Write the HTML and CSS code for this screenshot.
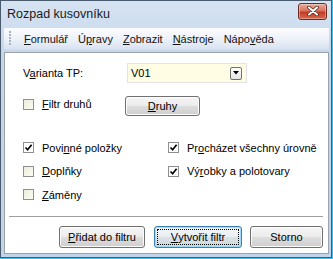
FILE: index.html
```html
<!DOCTYPE html>
<html lang="cs">
<head>
    <meta charset="utf-8">
    <title>Rozpad kusovníku</title>
    <link rel="stylesheet" href="styles.css">
</head>
<body>
    <div class="window">
        <div class="titlebar">
            <span class="title">Rozpad kusovníku</span>
            <button class="close-btn">
                <svg width="14" height="10" viewBox="0 0 14 10">
                    <path d="M3 1.5 L11 8.5 M11 1.5 L3 8.5" stroke="#5a2a22" stroke-width="3.6" stroke-linecap="round"/>
                    <path d="M3 1.5 L11 8.5 M11 1.5 L3 8.5" stroke="#ffffff" stroke-width="2" stroke-linecap="round"/>
                </svg>
            </button>
        </div>

        <div class="client">
            <div class="menubar">
                <span class="grip"></span>
                <span class="menu-item"><u>F</u>ormulář</span>
                <span class="menu-item">Ú<u>p</u>ravy</span>
                <span class="menu-item"><u>Z</u>obrazit</span>
                <span class="menu-item"><u>N</u>ástroje</span>
                <span class="menu-item">Nápo<u>v</u>ěda</span>
            </div>

            <div class="panel">
                <div class="row variant-row">
                    <span class="field-label">V<u>a</u>rianta TP:</span>
                    <div class="combo">
                        <span class="combo-value">V01</span>
                        <span class="combo-arrow">
                            <svg width="6" height="4" viewBox="0 0 6 4"><path d="M0 0 L6 0 L3 3.5 Z" fill="#000"/></svg>
                        </span>
                    </div>
                </div>

                <div class="row filter-row">
                    <label class="check filter-check">
                        <span class="box"></span>
                        <span><u>F</u>iltr druhů</span>
                    </label>
                    <button class="btn small-btn"><u>D</u>ruhy</button>
                </div>

                <div class="check-grid">
                    <label class="check">
                        <span class="box checked"><svg width="9" height="9" viewBox="0 0 9 9"><path d="M1.5 4.5 L3.6 6.8 L7.6 1.8" stroke="#000" stroke-width="1.7" fill="none"/></svg></span>
                        <span>Povi<u>n</u>né položky</span>
                    </label>
                    <label class="check">
                        <span class="box checked"><svg width="9" height="9" viewBox="0 0 9 9"><path d="M1.5 4.5 L3.6 6.8 L7.6 1.8" stroke="#000" stroke-width="1.7" fill="none"/></svg></span>
                        <span>Pr<u>o</u>cházet všechny úrovně</span>
                    </label>
                    <label class="check">
                        <span class="box"></span>
                        <span><u>D</u>oplňky</span>
                    </label>
                    <label class="check">
                        <span class="box checked"><svg width="9" height="9" viewBox="0 0 9 9"><path d="M1.5 4.5 L3.6 6.8 L7.6 1.8" stroke="#000" stroke-width="1.7" fill="none"/></svg></span>
                        <span>Vý<u>r</u>obky a polotovary</span>
                    </label>
                    <label class="check">
                        <span class="box"></span>
                        <span><u>Z</u>áměny</span>
                    </label>
                </div>

                <div class="separator"></div>

                <div class="button-row">
                    <button class="btn add-btn"><u>P</u>řidat do filtru</button>
                    <button class="btn create-btn focused"><span class="focus-rect"><u>V</u>ytvořit filtr</span></button>
                    <button class="btn cancel-btn">Storno</button>
                </div>
            </div>
        </div>
    </div>
</body>
</html>
```

FILE: styles.css
```css
body {
    margin: 0;
    background-color: #2fc4f2;
    font-family: "Liberation Sans", Arial, sans-serif;
    font-size: 11px;
    color: #000;
    overflow: hidden;
}

.window {
    width: 332px;
    height: 258px;
    box-sizing: border-box;
    border: 1px solid #4b5b6e;
    background: linear-gradient(to bottom, #d6e3f2, #c4d6ec 60px, #c2d4ea);
    display: flex;
    flex-direction: column;
}

.titlebar {
    height: 26px;
    display: flex;
    align-items: center;
    justify-content: space-between;
    padding: 0 4px 0 6px;
}

.title {
    font-size: 12.5px;
    color: #1b1b1b;
    margin-top: -1px;
}

.close-btn {
    width: 29px;
    height: 17px;
    margin-top: -6px;
    padding: 0;
    border: 1px solid #6e2a20;
    border-radius: 3px;
    background: linear-gradient(to bottom, #e9a999, #d8755f 45%, #c23d27 55%, #d5674c);
    display: flex;
    align-items: center;
    justify-content: center;
    box-shadow: inset 0 0 0 1px rgba(255, 255, 255, 0.35);
}

.client {
    flex: 1;
    display: flex;
    flex-direction: column;
    padding: 1px 2px 3px 3px;
}

.menubar {
    height: 21px;
    display: flex;
    align-items: center;
    gap: 10px;
    padding-left: 5px;
    background: linear-gradient(to bottom, #fbfcfe, #eef2f9 50%, #dbe3f1);
    border-bottom: 1px solid #d2dcea;
}

.grip {
    width: 2px;
    height: 15px;
    margin-right: 3px;
    background: repeating-linear-gradient(to bottom, #a9b4c4 0 2px, transparent 2px 3px);
}

.menu-item {
    font-size: 11px;
    color: #111;
}

.panel {
    flex: 1;
    margin-top: 2px;
    background-color: #fff;
    border: 1px solid #9aa3ad;
    padding: 0 5px 0 18px;
    display: flex;
    flex-direction: column;
}

.row {
    display: flex;
    align-items: center;
}

.variant-row {
    margin-top: 10px;
    height: 20px;
}

.field-label {
    width: 104px;
}

.combo {
    width: 120px;
    height: 20px;
    box-sizing: border-box;
    border: 1px solid #e2e3e5;
    background-color: #fffde3;
    display: flex;
    align-items: center;
    justify-content: space-between;
    padding: 0 4px 0 3px;
}

.combo-arrow {
    width: 10px;
    height: 11px;
    border: 1px solid #707070;
    border-radius: 2px;
    background: linear-gradient(to bottom, #ffffff, #e4e4e4);
    display: flex;
    align-items: center;
    justify-content: center;
}

.filter-row {
    margin-top: 13px;
    height: 20px;
}

.check {
    display: flex;
    align-items: center;
    gap: 8px;
}

.filter-check {
    width: 102px;
    margin-top: -4px;
}

.box {
    width: 11px;
    height: 11px;
    box-sizing: border-box;
    border: 1px solid #8e8f8f;
    background: linear-gradient(135deg, #eeeedd, #fbfbf1);
    display: flex;
    align-items: center;
    justify-content: center;
    flex-shrink: 0;
}

.box.checked {
    background: #fff;
}

.btn {
    font-family: "Liberation Sans", Arial, sans-serif;
    font-size: 11px;
    color: #000;
    height: 22px;
    box-sizing: border-box;
    border: 1px solid #707070;
    border-radius: 3px;
    background: linear-gradient(to bottom, #f6f6f6, #ebebeb 50%, #dddddd 51%, #cfcfcf);
    box-shadow: inset 0 0 0 1px #fcfcfc;
    padding: 0;
}

.small-btn {
    width: 75px;
    height: 20px;
}

.check-grid {
    margin-top: 20px;
    display: grid;
    grid-template-columns: 145px 1fr;
    grid-auto-rows: 23.5px;
    align-items: center;
}

.separator {
    margin: 9px 0 0 -14px;
    height: 1px;
    background-color: #a0a0a0;
    border-bottom: 1px solid #fff;
}

.button-row {
    margin-top: 8px;
    display: flex;
    justify-content: flex-end;
    gap: 9px;
}

.add-btn {
    width: 86px;
}

.create-btn {
    width: 88px;
}

.cancel-btn {
    width: 73px;
    margin-left: -1px;
}

.btn.focused {
    border-color: #3c7fb1;
    box-shadow: inset 0 0 0 1px #9fdcf7;
    background: linear-gradient(to bottom, #f2f6f9, #e9eef2 50%, #dbe2e7 51%, #ced6dc);
    padding: 2px;
}

.focus-rect {
    display: flex;
    align-items: center;
    justify-content: center;
    height: 100%;
    box-sizing: border-box;
    border: 1px dotted #000;
}
```
